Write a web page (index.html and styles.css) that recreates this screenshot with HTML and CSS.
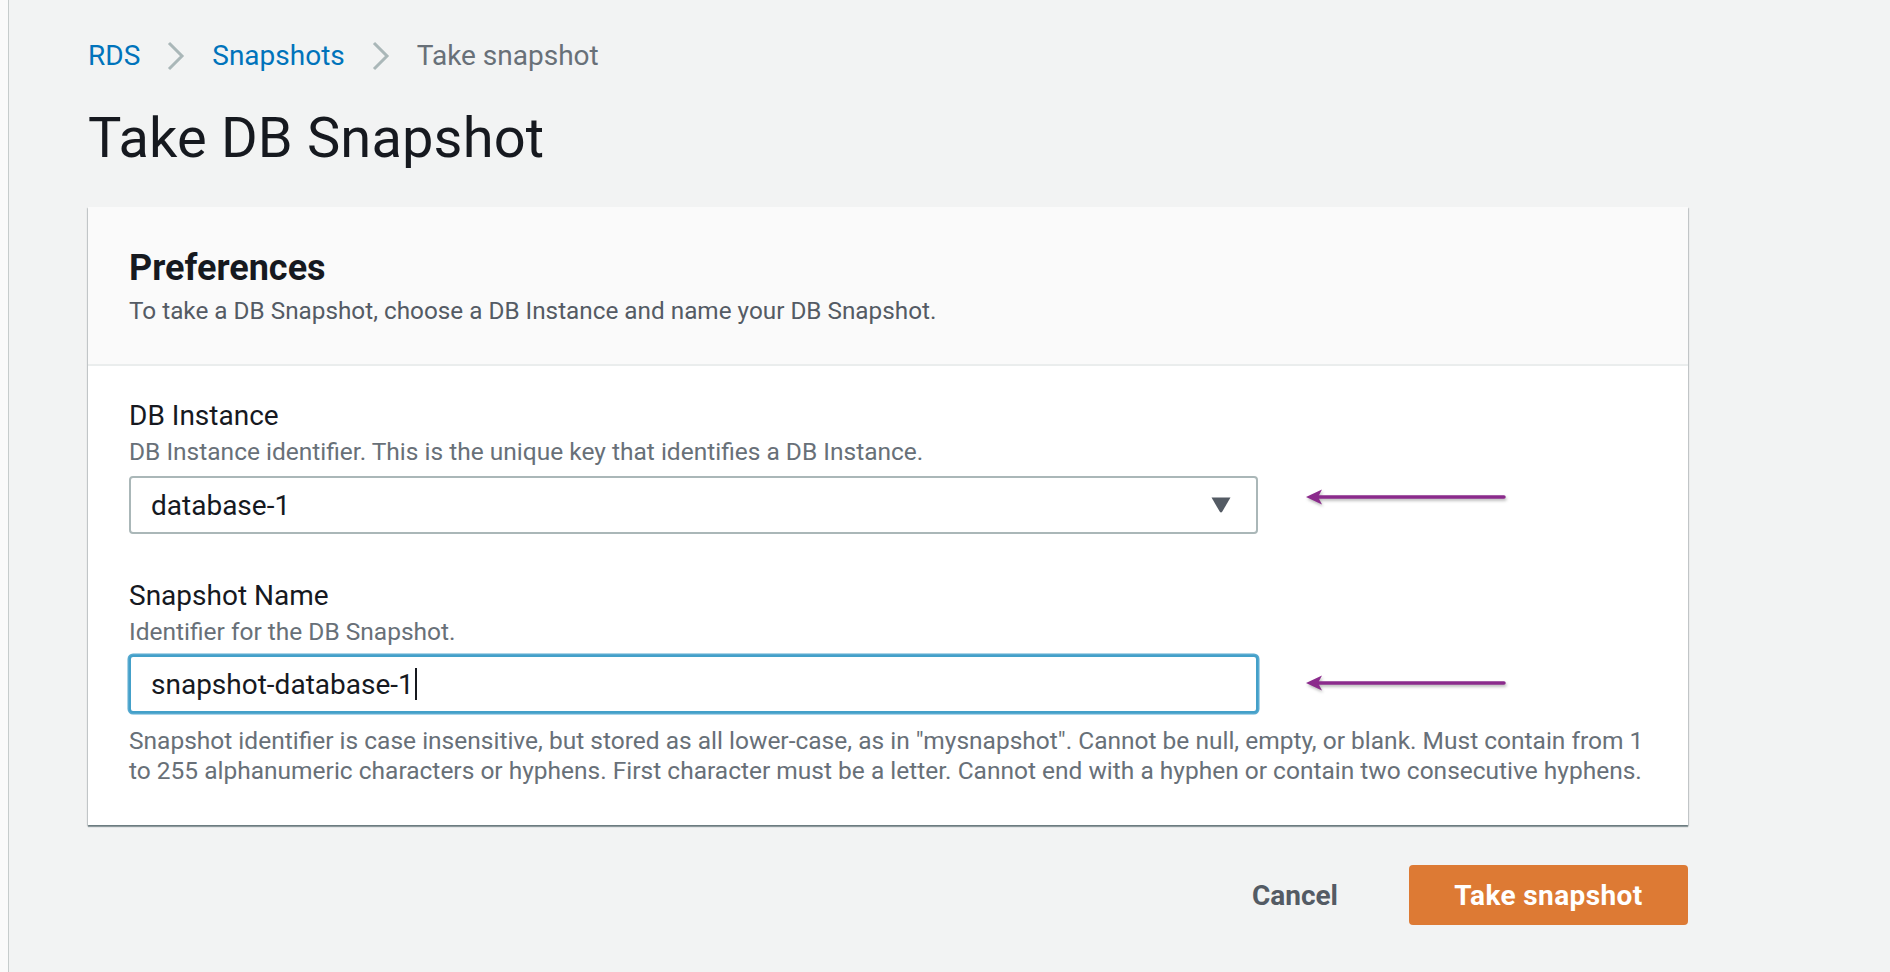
FILE: index.html
```html
<!DOCTYPE html>
<html lang="en">
<head>
<meta charset="utf-8">
<title>Take DB Snapshot</title>
<link rel="stylesheet" href="styles.css">
</head>
<body>
<div class="shell">
  <div class="rail"></div>
  <main class="content">
    <nav class="crumbs">
      <a class="crumb-link" href="#">RDS</a>
      <svg class="chev" width="19" height="30" viewBox="0 0 19 30"><polyline points="3,2 16,15 3,28" fill="none" stroke="#aab7b8" stroke-width="3"/></svg>
      <a class="crumb-link" href="#">Snapshots</a>
      <svg class="chev" width="19" height="30" viewBox="0 0 19 30"><polyline points="3,2 16,15 3,28" fill="none" stroke="#aab7b8" stroke-width="3"/></svg>
      <span class="crumb-current">Take snapshot</span>
    </nav>
    <h1 class="title">Take DB Snapshot</h1>

    <section class="card">
      <header class="card-head">
        <h2 class="card-title">Preferences</h2>
        <p class="card-desc">To take a DB Snapshot, choose a DB Instance and name your DB Snapshot.</p>
      </header>
      <div class="card-body">
        <div class="field">
          <div class="label">DB Instance</div>
          <div class="desc">DB Instance identifier. This is the unique key that identifies a DB Instance.</div>
          <div class="control-row">
            <div class="select">
              <span class="value">database-1</span>
              <svg class="select-caret" width="20" height="16" viewBox="0 0 20 16"><path d="M0.5 0.5 H19.5 L11.3 14.6 Q10 16.4 8.7 14.6 Z" fill="#545b64"/></svg>
            </div>
            <svg class="arrow arrow-up" width="202" height="24" viewBox="0 0 202 24"><line x1="10" y1="12" x2="199" y2="12" stroke="#8b2b8c" stroke-width="3.5" stroke-linecap="round"/><polygon points="1,12 17,4.5 13,12 17,19.5" fill="#8b2b8c"/></svg>
          </div>
        </div>
        <div class="field field-next">
          <div class="label">Snapshot Name</div>
          <div class="desc">Identifier for the DB Snapshot.</div>
          <div class="control-row">
            <div class="input"><span class="value">snapshot-database-1</span><span class="text-caret"></span></div>
            <svg class="arrow arrow-low" width="202" height="24" viewBox="0 0 202 24"><line x1="10" y1="12" x2="199" y2="12" stroke="#8b2b8c" stroke-width="3.5" stroke-linecap="round"/><polygon points="1,12 17,4.5 13,12 17,19.5" fill="#8b2b8c"/></svg>
          </div>
          <div class="hint">
            <span class="hint-line">Snapshot identifier is case insensitive, but stored as all lower-case, as in "mysnapshot". Cannot be null, empty, or blank. Must contain from 1</span>
            <span class="hint-line">to 255 alphanumeric characters or hyphens. First character must be a letter. Cannot end with a hyphen or contain two consecutive hyphens.</span>
          </div>
        </div>
      </div>
    </section>

    <div class="actions">
      <button class="btn-cancel" type="button">Cancel</button>
      <button class="btn-primary" type="button">Take snapshot</button>
    </div>
  </main>
</div>
</body>
</html>
```

FILE: styles.css
```css
* { box-sizing: border-box; }

html, body {
  margin: 0;
  padding: 0;
  height: 100%;
}

body {
  font-family: Roboto, "Liberation Sans", Arial, sans-serif;
  color: #16191f;
  background: #f2f3f3;
}

.shell {
  display: flex;
  min-height: 100%;
}

.rail {
  width: 9px;
  flex: none;
  background: #fafafa;
  border-right: 1px solid #c6cccc;
}

.content {
  flex: none;
  width: 1679px;
  padding: 38px 0 0 79px;
}

.crumbs {
  display: flex;
  align-items: center;
  height: 36px;
  font-size: 28px;
  line-height: 36px;
}

.crumb-link {
  color: #0073bb;
  text-decoration: none;
}

.crumb-current {
  color: #687078;
}

.chev {
  margin: 0 27px 0 26px;
  flex: none;
}

.title {
  margin: 32px 0 0;
  font-size: 56px;
  line-height: 64px;
  font-weight: 400;
  color: #16191f;
  letter-spacing: 0.15px;
}

.card {
  margin-top: 37px;
  width: 1600px;
  background: #ffffff;
  box-shadow: 0 2px 1px 0 rgba(0, 28, 36, 0.38), 1px 1px 1px 0 rgba(0, 28, 36, 0.15), -1px 1px 1px 0 rgba(0, 28, 36, 0.15);
}

.card-head {
  background: #fafafa;
  padding: 39px 40px 38px 41px;
  border-bottom: 2px solid #eaeded;
}

.card-title {
  margin: 0;
  font-size: 36px;
  line-height: 44px;
  font-weight: 700;
  color: #16191f;
}

.card-desc {
  margin: 6px 0 0;
  font-size: 24.3px;
  line-height: 30px;
  color: #545b64;
}

.card-body {
  padding: 32px 40px 39px 41px;
}

.field-next {
  margin-top: 44px;
}

.label {
  font-size: 28px;
  line-height: 36px;
  color: #16191f;
}

.desc {
  margin-top: 3px;
  font-size: 24.5px;
  line-height: 30px;
  color: #687078;
}

.control-row {
  display: flex;
  align-items: center;
  margin-top: 9px;
}

.field-next .control-row {
  margin-top: 8px;
}

.select,
.input {
  width: 1129px;
  height: 58px;
  display: flex;
  align-items: center;
  font-size: 28px;
  color: #16191f;
  border-radius: 4px;
  background: #ffffff;
}

.select {
  justify-content: space-between;
  border: 2px solid #aab7b8;
  padding: 0 25px 0 20px;
}

.input {
  border: 2.5px solid #44a0c9;
  box-shadow: 0 0 0 1.5px #58aad0;
  padding: 0 20px;
}

.text-caret {
  display: inline-block;
  width: 2px;
  height: 32px;
  margin-left: 1px;
  background: #16191f;
}

.arrow {
  flex: none;
  margin-left: 47px;
  filter: drop-shadow(1px 2px 1.5px rgba(0, 0, 0, 0.28));
}

.arrow-up {
  margin-top: -16px;
}

.arrow-low {
  margin-top: -3px;
}

.hint {
  margin-top: 13px;
  font-size: 24.5px;
  line-height: 30px;
  color: #687078;
}

.hint-line {
  display: block;
  white-space: nowrap;
}

.actions {
  width: 1600px;
  margin-top: 40px;
  display: flex;
  justify-content: flex-end;
  align-items: center;
}

.btn-cancel {
  font-family: inherit;
  font-size: 28px;
  font-weight: 700;
  color: #545b64;
  background: none;
  border: none;
  padding: 0;
  margin-right: 71px;
  cursor: pointer;
}

.btn-primary {
  font-family: inherit;
  font-size: 28px;
  font-weight: 700;
  letter-spacing: 0.4px;
  color: #ffffff;
  background: #dd7a34;
  border: none;
  border-radius: 4px;
  width: 279px;
  height: 60px;
  padding: 0;
  cursor: pointer;
}
```
